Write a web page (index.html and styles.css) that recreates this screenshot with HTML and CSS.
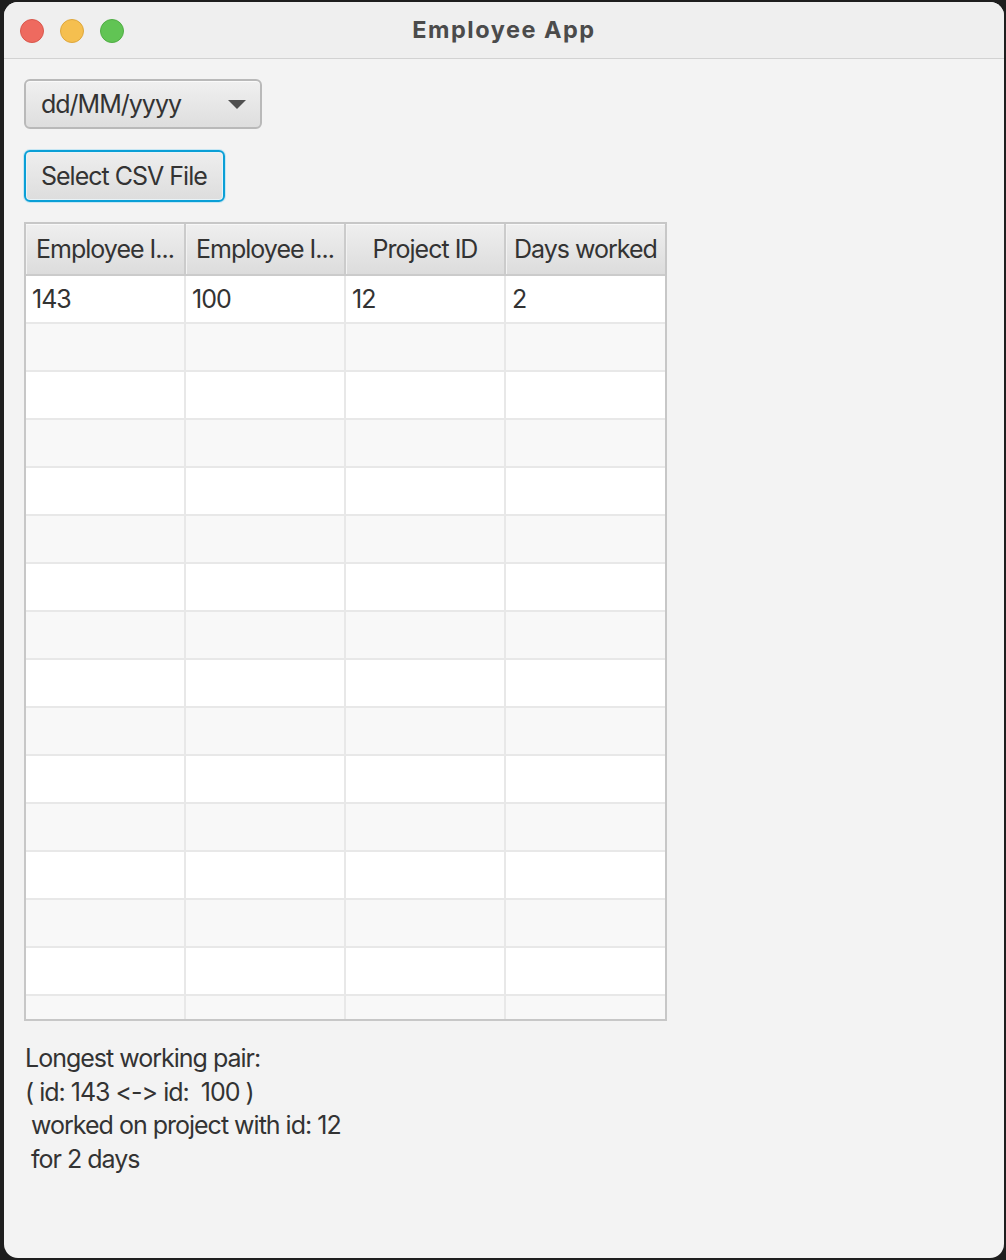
FILE: index.html
```html
<!DOCTYPE html>
<html lang="en">
<head>
<meta charset="utf-8">
<title>Employee App</title>
<link rel="stylesheet" href="styles.css">
</head>
<body>
<div class="window">
  <div class="titlebar">
    <div class="lights">
      <span class="light red"></span>
      <span class="light yellow"></span>
      <span class="light green"></span>
    </div>
    <div class="title">Employee App</div>
    <div class="spacer"></div>
  </div>
  <div class="content">
    <div class="combo">
      <span class="combo-text">dd/MM/yyyy</span>
      <span class="arrow"></span>
    </div>
    <div class="button">Select CSV File</div>
    <div class="table">
      <div class="thead">
        <div class="th">Employee I...</div>
        <div class="th">Employee I...</div>
        <div class="th">Project ID</div>
        <div class="th">Days worked</div>
      </div>
      <div class="tbody">
        <div class="tr"><div class="td">143</div><div class="td">100</div><div class="td">12</div><div class="td">2</div></div>
        <div class="tr odd"><div class="td"></div><div class="td"></div><div class="td"></div><div class="td"></div></div>
        <div class="tr"><div class="td"></div><div class="td"></div><div class="td"></div><div class="td"></div></div>
        <div class="tr odd"><div class="td"></div><div class="td"></div><div class="td"></div><div class="td"></div></div>
        <div class="tr"><div class="td"></div><div class="td"></div><div class="td"></div><div class="td"></div></div>
        <div class="tr odd"><div class="td"></div><div class="td"></div><div class="td"></div><div class="td"></div></div>
        <div class="tr"><div class="td"></div><div class="td"></div><div class="td"></div><div class="td"></div></div>
        <div class="tr odd"><div class="td"></div><div class="td"></div><div class="td"></div><div class="td"></div></div>
        <div class="tr"><div class="td"></div><div class="td"></div><div class="td"></div><div class="td"></div></div>
        <div class="tr odd"><div class="td"></div><div class="td"></div><div class="td"></div><div class="td"></div></div>
        <div class="tr"><div class="td"></div><div class="td"></div><div class="td"></div><div class="td"></div></div>
        <div class="tr odd"><div class="td"></div><div class="td"></div><div class="td"></div><div class="td"></div></div>
        <div class="tr"><div class="td"></div><div class="td"></div><div class="td"></div><div class="td"></div></div>
        <div class="tr odd"><div class="td"></div><div class="td"></div><div class="td"></div><div class="td"></div></div>
        <div class="tr"><div class="td"></div><div class="td"></div><div class="td"></div><div class="td"></div></div>
        <div class="tr odd"><div class="td"></div><div class="td"></div><div class="td"></div><div class="td"></div></div>
      </div>
    </div>
    <div class="result">Longest working pair:
( id: 143 &lt;-&gt; id:  100 )
 worked on project with id: 12
 for 2 days</div>
  </div>
</div>
</body>
</html>
```
FILE: styles.css
```css
html, body {
  margin: 0;
  padding: 0;
  background: #1e1e1e;
}
body {
  width: 1006px;
  height: 1260px;
  overflow: hidden;
  font-family: Inter, "Noto Sans", sans-serif;
  font-variant-ligatures: none;
  font-feature-settings: "calt" 0, "liga" 0;
  color: #333333;
}
.window {
  margin: 2px 2px 2px 4px;
  width: 1000px;
  height: 1256px;
  border-radius: 14px;
  overflow: hidden;
  background: #f3f3f3;
}
.titlebar {
  height: 56px;
  background: #efefef;
  border-bottom: 1px solid #d2d2d2;
  display: flex;
  align-items: center;
}
.lights {
  width: 120px;
  display: flex;
  gap: 16px;
  padding-left: 16px;
  box-sizing: border-box;
  padding-top: 2px;
}
.light {
  width: 24px;
  height: 24px;
  border-radius: 50%;
  box-sizing: border-box;
}
.red { background: #ee6a5f; border: 1px solid #d9574c; }
.yellow { background: #f5bf4f; border: 1px solid #dea73c; }
.green { background: #61c454; border: 1px solid #50ad44; }
.title {
  flex: 1;
  text-align: center;
  font-weight: 700;
  font-size: 23.5px;
  letter-spacing: 1.5px;
  color: #4b4b4b;
  padding-bottom: 2px;
}
.spacer { width: 120px; }
.content {
  padding: 20px 0 0 20px;
  display: flex;
  flex-direction: column;
  align-items: flex-start;
  font-size: 25px;
  letter-spacing: -1px;
}
.combo {
  width: 238px;
  height: 50px;
  box-sizing: border-box;
  border: 2px solid #b9b9b9;
  border-radius: 6px;
  background: linear-gradient(#f0f0f0, #dedede);
  box-shadow: inset 0 1px 0 #fafafa;
  display: flex;
  align-items: center;
  justify-content: space-between;
  padding: 0 14px 0 15px;
}
.arrow {
  width: 0;
  height: 0;
  border-left: 9px solid transparent;
  border-right: 9px solid transparent;
  border-top: 9px solid #4f4f4f;
}
.button {
  margin-top: 21px;
  width: 201px;
  height: 52px;
  box-sizing: border-box;
  border: 2px solid #0a9fd6;
  border-radius: 6px;
  background: linear-gradient(#eeeeee, #dddddd);
  box-shadow: 0 0 0 1px #c6e6f3, inset 0 0 0 1px #e9f3f7;
  display: flex;
  align-items: center;
  padding-left: 15px;
}
.table {
  margin-top: 20px;
  width: 643px;
  box-sizing: border-box;
  border: 2px solid #c7c7c7;
  background: #ffffff;
}
.thead {
  display: grid;
  grid-template-columns: 160px 160px 160px 159px;
  border-bottom: 2px solid #cbcbcb;
  background: #cbcbcb;
}
.th {
  height: 50px;
  box-sizing: border-box;
  border-right: 2px solid #cbcbcb;
  background: linear-gradient(#efefef, #dcdcdc);
  box-shadow: inset 0 1px 0 #f8f8f8, inset 1px 0 0 #f2f2f2;
  display: flex;
  align-items: center;
  justify-content: center;
  white-space: nowrap;
  overflow: hidden;
}
.th:last-child { border-right: none; }
.tbody {
  height: 743px;
  overflow: hidden;
}
.tr {
  display: grid;
  grid-template-columns: 160px 160px 160px 159px;
  border-bottom: 2px solid #e8e8e8;
  background: #ffffff;
}
.tr.odd { background: #f8f8f8; }
.td {
  height: 46px;
  box-sizing: border-box;
  border-right: 2px solid #e8e8e8;
  padding-left: 6px;
  display: flex;
  align-items: center;
}
.td:last-child { border-right: none; }
.result {
  margin-top: 21px;
  padding-left: 1px;
  white-space: pre;
  line-height: 33.5px;
}
```
